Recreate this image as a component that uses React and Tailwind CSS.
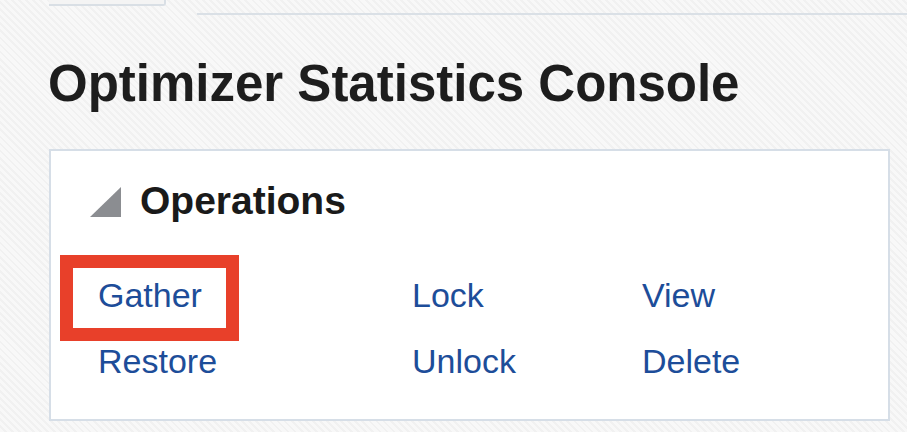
const links = [
  ["Gather", "Lock", "View"],
  ["Restore", "Unlock", "Delete"],
];

const App = () => {
  return (
    <div
      className="h-[432px] w-full overflow-hidden bg-[repeating-linear-gradient(45deg,#f8f8f8_0px,#f8f8f8_3px,#f1f1f1_3px,#f1f1f1_5px)]"
      style={{ fontFamily: '"Liberation Sans", Arial, sans-serif' }}
    >
      {/* Top tab strip */}
      <div className="flex items-start h-[16px]">
        <div className="ml-[49px] w-[117px] h-[6px] border-b-2 border-r-2 border-[#d9dfe5] rounded-br-[3px] bg-[#f4f4f4]" />
        <div className="ml-[31px] mt-[13px] flex-1 h-[2px] bg-[#dae0e6]" />
      </div>

      {/* Title */}
      <h1 className="mt-[42px] ml-[48px] text-[51px] leading-none font-bold text-[#1d1d1d]">
        Optimizer Statistics Console
      </h1>

      {/* Operations panel */}
      <div className="mt-[40px] ml-[49px] w-[841px] bg-white border-2 border-[#d6dee7] pt-[30px] pb-[39px]">
        <div className="flex items-center pl-[39px]">
          <svg width="31" height="30" viewBox="0 0 31 30" className="mt-[3px]">
            <polygon points="31,0 31,30 0,30" fill="#8b8d91" />
          </svg>
          <span className="ml-[19px] text-[39px] leading-none font-bold text-[#1a1a1a]">
            Operations
          </span>
        </div>

        <div className="mt-[58px] pl-[47px] flex flex-col gap-[30px]">
          {links.map((row, i) => (
            <div key={i} className="grid grid-cols-[314px_230px_1fr]">
              {row.map((label, j) => (
                <div key={label} className="relative">
                  <a href="#" className="text-[34px] leading-none text-[#1d4d99]">
                    {label}
                  </a>
                  {i === 0 && j === 0 && (
                    <div className="absolute left-[-38px] top-[-23px] w-[179px] h-[86px] border-[13px] border-[#e8402a] pointer-events-none" />
                  )}
                </div>
              ))}
            </div>
          ))}
        </div>
      </div>
    </div>
  );
};

export default App;
